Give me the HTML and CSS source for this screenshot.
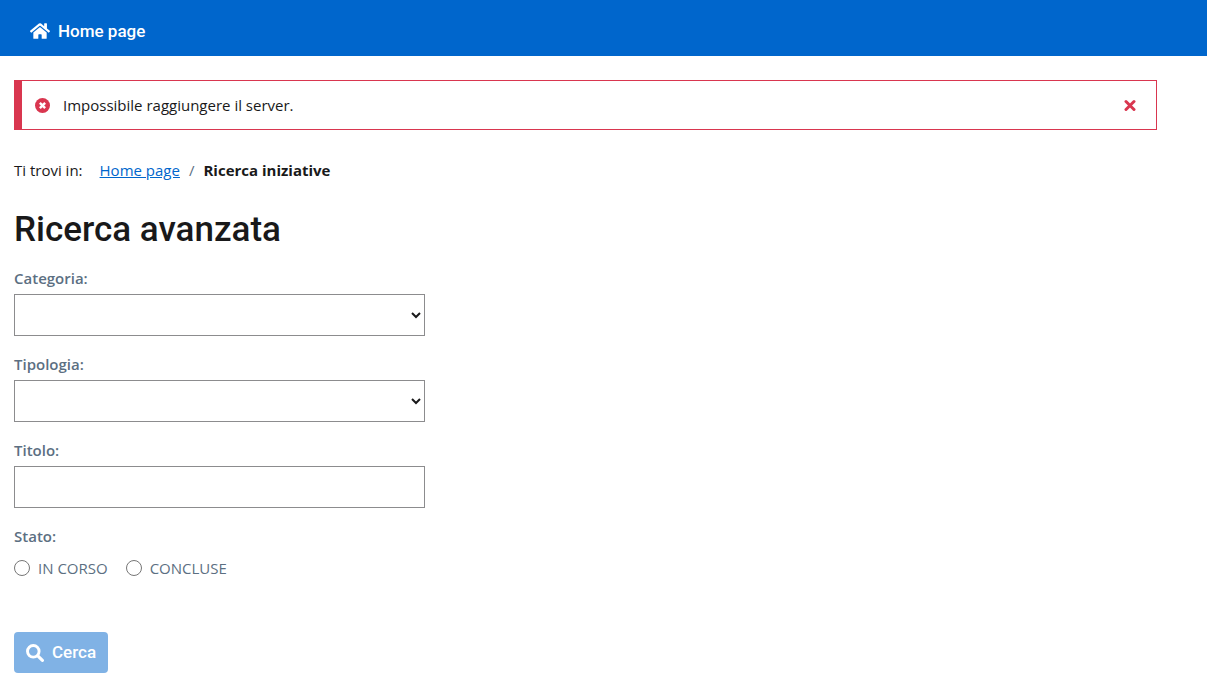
FILE: index.html
```html
<!DOCTYPE html>
<html lang="it">
<head>
<meta charset="utf-8">
<meta name="viewport" content="width=device-width, initial-scale=1">
<title>Ricerca iniziative</title>
<link rel="stylesheet" href="styles.css">
</head>
<body>
<header class="topbar">
  <nav>
    <a class="topbar-link" href="#">
      <svg class="icon-home" viewBox="0 0 576 512" aria-hidden="true"><path fill="currentColor" d="M280 148 96 300v164a16 16 0 0 0 16 16h112a16 16 0 0 0 16-16v-96a16 16 0 0 1 16-16h64a16 16 0 0 1 16 16v96a16 16 0 0 0 16 16h112a16 16 0 0 0 16-16V300L296 148a12 12 0 0 0-16 0zM571 251l-83-69V44a12 12 0 0 0-12-12h-56a12 12 0 0 0-12 12v72l-89-74a48 48 0 0 0-61 0L4 251a12 12 0 0 0-1 17l25 31a12 12 0 0 0 17 2L280 107a12 12 0 0 1 16 0l235 194a12 12 0 0 0 17-2l25-31a12 12 0 0 0-2-17z"/></svg>
      <span>Home page</span>
    </a>
  </nav>
</header>
<main class="page">
  <div class="alert" role="alert">
    <svg class="icon-error" viewBox="0 0 16 16" aria-hidden="true"><circle cx="8" cy="8" r="8" fill="currentColor"/><path d="m5.2 5.2 5.6 5.6m0-5.6-5.6 5.6" stroke="#fff" stroke-width="2.6"/></svg>
    <span class="alert-text">Impossibile raggiungere il server.</span>
    <button class="alert-close" type="button" aria-label="Chiudi">
      <svg class="icon-close" viewBox="0 0 12 12" aria-hidden="true"><path d="m2 2.5 8 8m0-8-8 8" stroke="currentColor" stroke-width="3" stroke-linecap="round"/></svg>
    </button>
  </div>
  <nav class="breadcrumb" aria-label="Percorso">
    <span class="breadcrumb-intro">Ti trovi in:</span>
    <a href="#">Home page</a>
    <span class="breadcrumb-separator">/</span>
    <span class="breadcrumb-current" aria-current="page">Ricerca iniziative</span>
  </nav>
  <h1 class="title">Ricerca avanzata</h1>
  <form class="search">
    <div class="field">
      <label class="label" for="categoria">Categoria:</label>
      <select class="control" id="categoria"><option></option></select>
    </div>
    <div class="field">
      <label class="label" for="tipologia">Tipologia:</label>
      <select class="control" id="tipologia"><option></option></select>
    </div>
    <div class="field">
      <label class="label" for="titolo">Titolo:</label>
      <input class="control" id="titolo" type="text">
    </div>
    <fieldset class="field status">
      <legend class="label">Stato:</legend>
      <div class="radios">
        <label class="radio"><input type="radio" name="stato">IN CORSO</label>
        <label class="radio"><input type="radio" name="stato">CONCLUSE</label>
      </div>
    </fieldset>
    <button class="submit" type="submit" disabled>
      <svg class="icon-search" viewBox="0 0 18 18" aria-hidden="true"><circle cx="7.3" cy="7.3" r="5.8" fill="none" stroke="currentColor" stroke-width="2.9"/><path d="m11.8 11.8 4.6 4.6" stroke="currentColor" stroke-width="3.1" stroke-linecap="round"/></svg>
      <span>Cerca</span>
    </button>
  </form>
</main>
</body>
</html>
```
FILE: styles.css
```css
*,
*::before,
*::after {
  box-sizing: border-box;
}

body {
  margin: 0;
  background: #fff;
  color: #19191a;
  font: 15px/24px "Open Sans", "Noto Sans", sans-serif;
}

svg {
  display: block;
  flex: none;
  fill: none;
}

.topbar {
  padding: 19px 30px 13px;
  background: #06c;
}

.topbar-link {
  display: inline-flex;
  align-items: center;
  gap: 8px;
  vertical-align: top;
  color: #fff;
  font-family: Roboto, sans-serif;
  font-size: 17px;
  font-weight: 500;
  text-decoration: none;
}

.icon-home {
  width: 20px;
  height: 18px;
}

.page {
  padding: 24px 50px 7px 14px;
}

.alert {
  display: flex;
  align-items: center;
  padding: 12px 20px 12px 13px;
  border: 1px solid #d9364f;
  border-left-width: 8px;
}

.icon-error {
  width: 15px;
  height: 15px;
  margin-right: 13px;
  color: #d9364f;
}

.alert-text {
  flex: 1;
}

.alert-close {
  padding: 0;
  border: 0;
  background: none;
  color: #d9364f;
}

.icon-close {
  width: 12px;
  height: 12px;
}

.breadcrumb {
  display: flex;
  gap: 9px;
  margin: 28px 0 24px;
}

.breadcrumb-intro {
  margin-right: 8px;
}

.breadcrumb a {
  color: #06c;
}

.breadcrumb-separator {
  color: #5c6f82;
}

.breadcrumb-current {
  font-weight: 700;
}

.title {
  margin: 0 0 12px;
  font: 500 35px/48px Roboto, sans-serif;
}

.field {
  margin: 0 0 16px;
}

.search {
  max-width: 411px;
}

.label {
  display: block;
  padding: 0;
  margin-bottom: 4px;
  color: #5c6f82;
  font-weight: 600;
}

.control {
  display: block;
  width: 100%;
  height: 42px;
  padding: 0 1px;
  border: 1px solid #8c8c8e;
  border-radius: 0;
  background-color: #fff;
  color: #19191a;
  font: inherit;
}

input.control {
  padding: 0 8px;
}

.status {
  padding: 0;
  border: 0;
  margin-bottom: 52px;
}

.status .label {
  margin-bottom: 8px;
}

.radios {
  display: flex;
  gap: 18px;
}

.radio {
  display: flex;
  align-items: center;
  gap: 8px;
  color: #5c6f82;
}

.radio input {
  width: 16px;
  height: 16px;
  margin: 0;
}

.submit {
  display: flex;
  align-items: center;
  gap: 8px;
  padding: 8px 12px;
  border: 0;
  border-radius: 4px;
  background: #80b2e5;
  color: #fff;
  font: 500 17px/25px Roboto, sans-serif;
}

.icon-search {
  width: 18px;
  height: 18px;
}
```
